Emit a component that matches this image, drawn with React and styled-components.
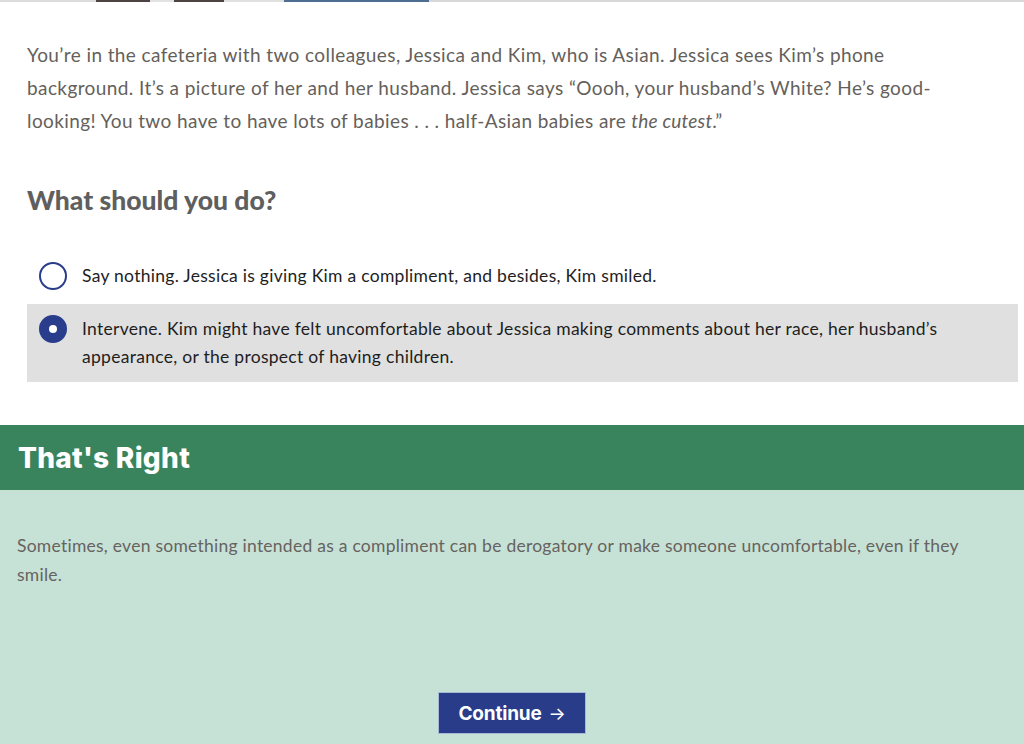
import React, { useState } from "react";
import styled, { createGlobalStyle } from "styled-components";

const Global = createGlobalStyle`
  html, body { margin: 0; padding: 0; background: #fff; }
  body { font-family: Lato, "Open Sans", sans-serif; -webkit-font-smoothing: antialiased; }
  * { box-sizing: border-box; }
`;

const Page = styled.div`
  width: 1024px;
  min-height: 744px;
  display: flex;
  flex-direction: column;
  overflow: hidden;
`;

const TopStrip = styled.div`
  height: 2px;
  display: flex;
  background: #dcdcdc;
`;

const StripBlock = styled.div`
  width: ${(p) => p.$w}px;
  background: ${(p) => p.$c};
`;

const Question = styled.section`
  padding: 36px 6px 0 27px;
`;

const Scenario = styled.p`
  margin: 0;
  font-family: Lato, sans-serif;
  font-size: 19px;
  letter-spacing: 0.4px;
  line-height: 33px;
  color: #655f5b;
  max-width: 945px;
`;

const Emph = styled.em`
  font-style: italic;
  letter-spacing: 0.2px;
`;

const Prompt = styled.h2`
  margin: 48px 0 0;
  font-family: Lato, sans-serif;
  font-weight: 900;
  font-size: 26.5px;
  line-height: 31px;
  color: #5f5f5f;
`;

const Options = styled.div`
  margin-top: 35px;
  display: flex;
  flex-direction: column;
  gap: 3px;
`;

const Option = styled.label`
  display: flex;
  align-items: flex-start;
  gap: 15px;
  padding: 11px 12px;
  background: ${(p) => (p.$selected ? "#e0e0e0" : "transparent")};
  cursor: pointer;
`;

const Radio = styled.span`
  flex: none;
  width: 28px;
  height: 28px;
  border-radius: 50%;
  border: 2px solid #293d8c;
  background: ${(p) => (p.$checked ? "#293d8c" : "#fff")};
  display: flex;
  align-items: center;
  justify-content: center;
  &::after {
    content: "";
    width: 8px;
    height: 8px;
    border-radius: 50%;
    background: #fff;
    display: ${(p) => (p.$checked ? "block" : "none")};
  }
`;

const OptionText = styled.span`
  font-family: Lato, sans-serif;
  font-size: 17.5px;
  letter-spacing: 0.28px;
  line-height: 28px;
  color: #1e1e1e;
  max-width: 870px;
`;

const Feedback = styled.section`
  margin-top: 43px;
  flex: 1;
  display: flex;
  flex-direction: column;
  background: #c6e1d6;
`;

const FeedbackHeader = styled.div`
  height: 65px;
  background: #3a845d;
  display: flex;
  align-items: center;
  padding-left: 18px;
`;

const FeedbackTitle = styled.h3`
  margin: 0;
  font-family: Inter, sans-serif;
  font-weight: 800;
  font-size: 28px;
  letter-spacing: 0.3px;
  color: #fff;
`;

const FeedbackBody = styled.div`
  padding: 41px 17px 9px;
  display: flex;
  flex-direction: column;
`;

const FeedbackText = styled.p`
  margin: 0;
  font-family: Lato, sans-serif;
  font-size: 17.5px;
  letter-spacing: 0.25px;
  line-height: 29px;
  color: #666360;
  max-width: 960px;
`;

const ContinueButton = styled.button`
  align-self: center;
  margin-top: 103px;
  width: 148px;
  height: 42px;
  border: 1px solid #aab8d8;
  background: #283c89;
  color: #fff;
  font-family: Inter, sans-serif;
  font-weight: 700;
  font-size: 19px;
  letter-spacing: -0.2px;
  display: flex;
  align-items: center;
  justify-content: center;
  gap: 7px;
  cursor: pointer;
`;

const Arrow = styled.span`
  font-weight: 400;
  font-size: 18px;
`;

const strip = [
  { w: 96, c: "#dcdcdc" },
  { w: 54, c: "#4d4340" },
  { w: 24, c: "#e2e2e2" },
  { w: 50, c: "#4d4340" },
  { w: 60, c: "#e0e0e0" },
  { w: 145, c: "#4d6e90" },
  { w: 595, c: "#d8d8d8" },
];

const options = [
  "Say nothing. Jessica is giving Kim a compliment, and besides, Kim smiled.",
  "Intervene. Kim might have felt uncomfortable about Jessica making comments about her race, her husband’s appearance, or the prospect of having children.",
];

export default function App() {
  const [selected, setSelected] = useState(1);
  return (
    <Page>
      <Global />
      <TopStrip>
        {strip.map((s, i) => (
          <StripBlock key={i} $w={s.w} $c={s.c} />
        ))}
      </TopStrip>
      <Question>
        <Scenario>
          You’re in the cafeteria with two colleagues, Jessica and Kim, who is Asian. Jessica sees Kim’s phone
          background. It’s a picture of her and her husband. Jessica says “Oooh, your husband’s White? He’s good-looking!
          You two have to have lots of babies . . . half-Asian babies are <Emph>the cutest</Emph>.”
        </Scenario>
        <Prompt>What should you do?</Prompt>
        <Options>
          {options.map((o, i) => (
            <Option key={i} $selected={selected === i} onClick={() => setSelected(i)}>
              <Radio $checked={selected === i} />
              <OptionText>{o}</OptionText>
            </Option>
          ))}
        </Options>
      </Question>
      <Feedback>
        <FeedbackHeader>
          <FeedbackTitle>That's Right</FeedbackTitle>
        </FeedbackHeader>
        <FeedbackBody>
          <FeedbackText>
            Sometimes, even something intended as a compliment can be derogatory or make someone uncomfortable, even if
            they smile.
          </FeedbackText>
          <ContinueButton>
            Continue <Arrow>→</Arrow>
          </ContinueButton>
        </FeedbackBody>
      </Feedback>
    </Page>
  );
}
